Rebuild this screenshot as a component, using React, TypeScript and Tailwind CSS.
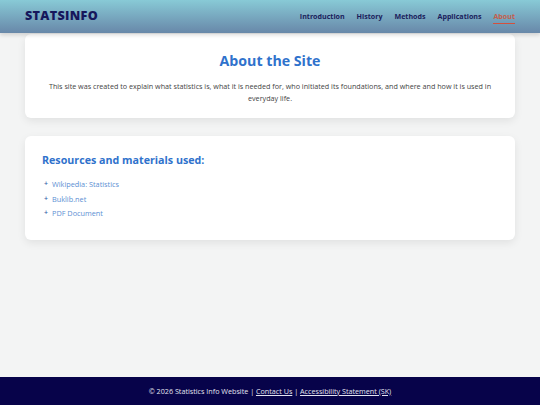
const navItems = ['Introduction', 'History', 'Methods', 'Applications', 'About'];

const sources = ['Wikipedia: Statistics', 'Buklib.net', 'PDF Document'];

const Header = () => (
  <header className="sticky top-0 z-10 h-[33px] flex items-center justify-between px-[25px] bg-gradient-to-b from-[#88cad6] to-[#6888a9] shadow-[0_2px_4px_rgba(0,0,0,0.15)]">
    <span className="text-[12.6px] font-extrabold tracking-[0.3px] text-[#16175c]">STATSINFO</span>
    <nav className="flex items-center gap-[12px]">
      {navItems.map((item) => (
        <a
          key={item}
          className={`text-[7.1px] font-bold ${
            item === 'About'
              ? 'text-[#c4604c] border-b-[1.5px] border-[#d4503c] pb-[1px] mt-[2px]'
              : 'text-[#1a1d5c]'
          }`}
        >
          {item}
        </a>
      ))}
    </nav>
  </header>
);

const App = () => {
  return (
    <div className="min-h-screen flex flex-col bg-[#f3f4f4] font-['Open_Sans',sans-serif]">
      <Header />

      <main className="flex-1 flex flex-col gap-[18px] px-[25px] pt-px">
        <section className="bg-white rounded-[6px] shadow-[0_3px_8px_rgba(0,0,0,0.08)] pt-[17px] pb-[14px] px-[20px] text-center">
          <h1 className="text-[14.2px] leading-[20px] font-bold text-[#2f72cc]">About the Site</h1>
          <p className="mt-[9px] text-[7.2px] leading-[12px] text-[#444]">
            This site was created to explain what statistics is, what it is needed for, who initiated its foundations, and where and how it is used in everyday life.
          </p>
        </section>

        <section className="bg-white rounded-[6px] shadow-[0_3px_8px_rgba(0,0,0,0.08)] pt-[16px] pb-[20px] px-[17px]">
          <h2 className="text-[10.7px] leading-[16px] font-bold text-[#2f72cc]">Resources and materials used:</h2>
          <ul className="mt-[10px] flex flex-col gap-[2px]">
            {sources.map((s) => (
              <li key={s} className="flex items-center gap-[3px] text-[7.3px] leading-[12.5px]">
                <span className="text-[#3560a8] text-[7px] font-semibold w-[5px] ml-[2px]">+</span>
                <a className="text-[#5c8fd3]">{s}</a>
              </li>
            ))}
          </ul>
        </section>
      </main>

      <footer className="h-[28px] flex items-center justify-center bg-[#07034a] text-[7.2px] text-[#e4e4f0]">
        <span>
          © 2026 Statistics Info Website | <a className="underline">Contact Us</a> |{' '}
          <a className="underline">Accessibility Statement (SK)</a>
        </span>
      </footer>
    </div>
  );
};

export default App;
